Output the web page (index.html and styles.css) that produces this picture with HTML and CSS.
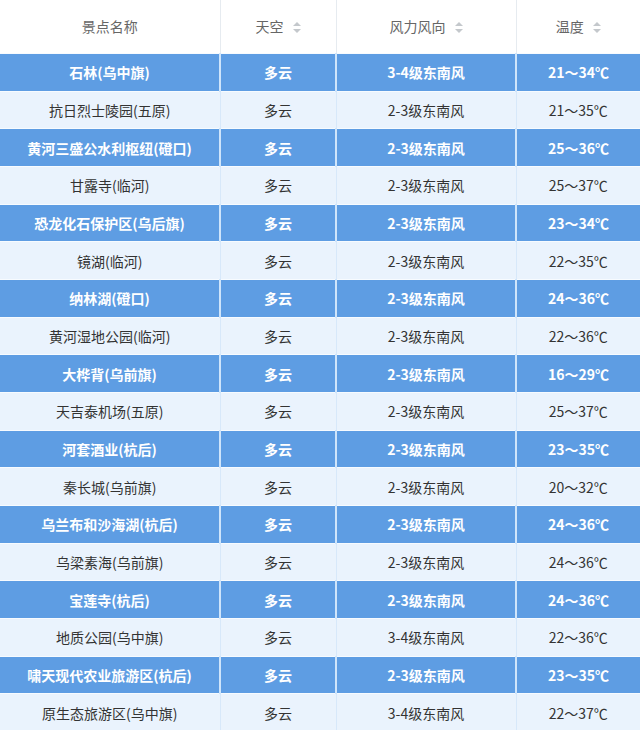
FILE: index.html
```html
<!DOCTYPE html>
<html lang="zh">
<head>
<meta charset="utf-8">
<title>景点天气</title>
<link rel="stylesheet" href="styles.css">
</head>
<body>
<table class="weather">
  <colgroup>
    <col class="c1"><col class="c2"><col class="c3"><col class="c4">
  </colgroup>
  <thead>
    <tr>
      <th>景点名称</th>
      <th>天空<span class="sort"></span></th>
      <th>风力风向<span class="sort"></span></th>
      <th>温度<span class="sort"></span></th>
    </tr>
  </thead>
  <tbody>
    <tr class="hl"><td>石林(乌中旗)</td><td>多云</td><td>3-4级东南风</td><td>21～34℃</td></tr>
    <tr><td>抗日烈士陵园(五原)</td><td>多云</td><td>2-3级东南风</td><td>21～35℃</td></tr>
    <tr class="hl"><td>黄河三盛公水利枢纽(磴口)</td><td>多云</td><td>2-3级东南风</td><td>25～36℃</td></tr>
    <tr><td>甘露寺(临河)</td><td>多云</td><td>2-3级东南风</td><td>25～37℃</td></tr>
    <tr class="hl"><td>恐龙化石保护区(乌后旗)</td><td>多云</td><td>2-3级东南风</td><td>23～34℃</td></tr>
    <tr><td>镜湖(临河)</td><td>多云</td><td>2-3级东南风</td><td>22～35℃</td></tr>
    <tr class="hl"><td>纳林湖(磴口)</td><td>多云</td><td>2-3级东南风</td><td>24～36℃</td></tr>
    <tr><td>黄河湿地公园(临河)</td><td>多云</td><td>2-3级东南风</td><td>22～36℃</td></tr>
    <tr class="hl"><td>大桦背(乌前旗)</td><td>多云</td><td>2-3级东南风</td><td>16～29℃</td></tr>
    <tr><td>天吉泰机场(五原)</td><td>多云</td><td>2-3级东南风</td><td>25～37℃</td></tr>
    <tr class="hl"><td>河套酒业(杭后)</td><td>多云</td><td>2-3级东南风</td><td>23～35℃</td></tr>
    <tr><td>秦长城(乌前旗)</td><td>多云</td><td>2-3级东南风</td><td>20～32℃</td></tr>
    <tr class="hl"><td>乌兰布和沙海湖(杭后)</td><td>多云</td><td>2-3级东南风</td><td>24～36℃</td></tr>
    <tr><td>乌梁素海(乌前旗)</td><td>多云</td><td>2-3级东南风</td><td>24～36℃</td></tr>
    <tr class="hl"><td>宝莲寺(杭后)</td><td>多云</td><td>2-3级东南风</td><td>24～36℃</td></tr>
    <tr><td>地质公园(乌中旗)</td><td>多云</td><td>3-4级东南风</td><td>22～36℃</td></tr>
    <tr class="hl"><td>啸天现代农业旅游区(杭后)</td><td>多云</td><td>2-3级东南风</td><td>23～35℃</td></tr>
    <tr><td>原生态旅游区(乌中旗)</td><td>多云</td><td>3-4级东南风</td><td>22～37℃</td></tr>
  </tbody>
</table>
</body>
</html>
```
FILE: styles.css
```css
html, body {
  margin: 0;
  padding: 0;
  background: #ffffff;
}
body {
  font-family: "Noto Sans CJK SC", "Noto Sans", sans-serif;
}
.weather {
  width: 640px;
  border-collapse: collapse;
  table-layout: fixed;
  font-size: 14px;
}
.c1 { width: 220px; }
.c2 { width: 116px; }
.c3 { width: 180px; }
.c4 { width: 124px; }

.weather th {
  height: 52px;
  padding: 0 0 1px;
  font-weight: normal;
  color: #666666;
  background: #ffffff;
  border-left: 1px solid #e6ebf0;
  text-align: center;
  vertical-align: middle;
  font-size: 14px;
}
.weather th:first-child { border-left: none; }

.sort {
  display: inline-block;
  width: 8px;
  height: 11px;
  margin-left: 9px;
  vertical-align: -1px;
  position: relative;
}
.sort::before,
.sort::after {
  content: "";
  position: absolute;
  left: 0;
  border-left: 4px solid transparent;
  border-right: 4px solid transparent;
}
.sort::before {
  top: 0;
  border-bottom: 4px solid #c4c8cc;
}
.sort::after {
  bottom: 0;
  border-top: 4px solid #c4c8cc;
}

.weather tbody tr {
  height: 37.67px;
}
.weather td {
  height: 36.6px;
  padding: 0;
  line-height: 20px;
  text-align: center;
  vertical-align: middle;
  color: #333333;
  background: #eaf3fd;
  border-left: 1px solid #d7e8fa;
  border-top: 1px solid #f7fbff;
  white-space: nowrap;
}
.weather td:first-child { border-left: none; }

.weather tr.hl td {
  background: #5e9de3;
  color: #ffffff;
  font-weight: bold;
  border-left: 2px solid #cfe5fb;
  border-top: 1px solid #f7fbff;
}
.weather tr.hl td:first-child { border-left: none; }
```
